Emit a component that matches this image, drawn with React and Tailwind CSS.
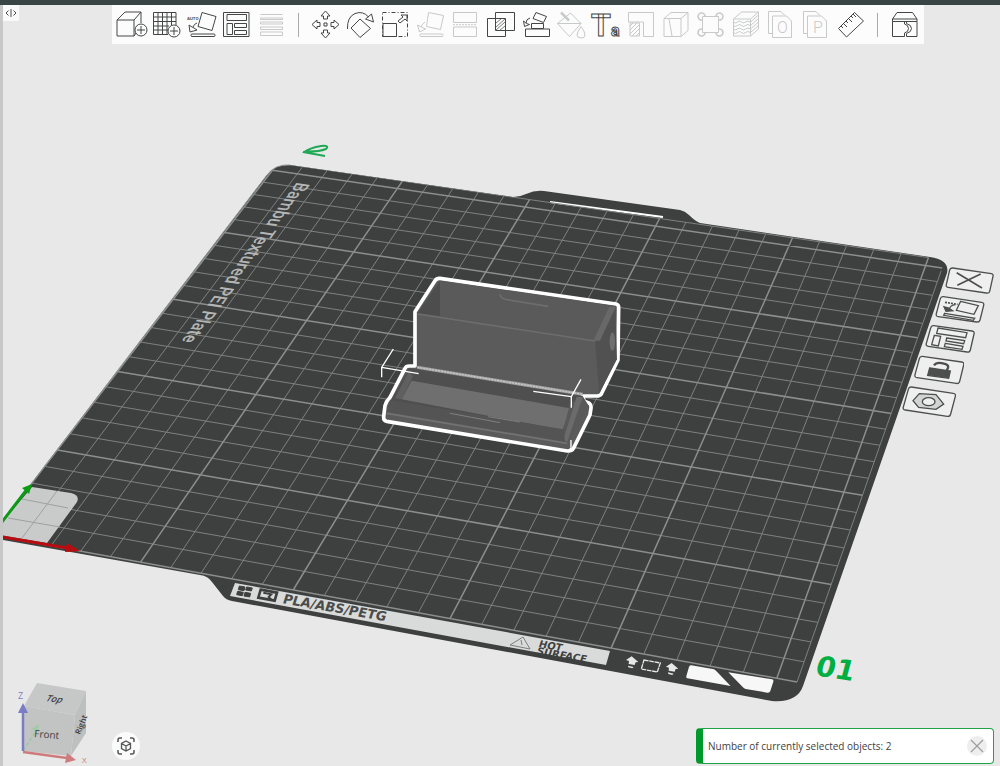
import React from "react";

// plate corners on screen: front left, front right, back right, back left
const CORNERS = [
  [-8, 535],
  [797, 682],
  [945, 260],
  [278, 163],
];
const BED = 256;

// maps a point on the bed (in mm) to the screen, with perspective
const project = (mx, my) => {
  const u = mx / BED;
  const v = my / BED;
  const [[x0, y0], [x1, y1], [x2, y2], [x3, y3]] = CORNERS;
  const dx1 = x1 - x2;
  const dx2 = x3 - x2;
  const dx3 = x0 - x1 + x2 - x3;
  const dy1 = y1 - y2;
  const dy2 = y3 - y2;
  const dy3 = y0 - y1 + y2 - y3;
  const det = dx1 * dy2 - dx2 * dy1;
  const g = (dx3 * dy2 - dx2 * dy3) / det;
  const h = (dx1 * dy3 - dx3 * dy1) / det;
  const w = g * u + h * v + 1;
  return [
    ((x1 - x0 + g * x1) * u + (x3 - x0 + h * x3) * v + x0) / w,
    ((y1 - y0 + g * y1) * u + (y3 - y0 + h * y3) * v + y0) / w,
  ];
};

const line = (a, b, c, d) => {
  const [x1, y1] = project(a, b);
  const [x2, y2] = project(c, d);
  return `M${x1.toFixed(1)} ${y1.toFixed(1)}L${x2.toFixed(1)} ${y2.toFixed(1)}`;
};

const steps = Array.from({ length: 26 }, (_, i) => i * 10);
const gridPath = (list) =>
  list.map((n) => line(n, 0, n, BED) + line(0, n, BED, n)).join("");
const minorGrid = gridPath(steps.filter((n) => n % 50 !== 0));
const majorGrid = gridPath(steps.filter((n) => n % 50 === 0));
const gridEdge = line(0, BED, 250, BED) + line(BED, 0, BED, 248);

const plateShape =
  "M-8 535L267 175Q275 164 290 165L513 197Q520 197 526 194Q535 190 544 191L680 210Q685 211 689 215Q695 221 700 223L930 257Q950 260 947 273L803 686Q797 703 772 701L232 601Q226 600 223 596L212 582Q208 576 200 575L-8 538Z";

const Grid = () => (
  <g fill="none" clipPath="url(#plate)">
    <path d={minorGrid} stroke="#7d807f" strokeWidth="1" />
    <path d={majorGrid} stroke="#8b8e8d" strokeWidth="1.5" />
    <path d={gridEdge} stroke="#7d807f" strokeWidth="1" />
  </g>
);

const Plate = () => (
  <g>
    <clipPath id="plate">
      <path d={plateShape} />
    </clipPath>
    <path d={plateShape} fill="#3e403f" />
    <path d="M-8 535L267 175Q275 164 290 165" fill="none" stroke="#8d908f" />
    <path d="M550 202L663 217" stroke="#fff" strokeWidth="2" />
    <Grid />
    {/* exclude area */}
    <path d="M-8 534L32 487L71 493Q80 495 77 502L47 543Z" fill="#c9caca" />
    <path d="M22 499L68 508M8 518L60 527M22 538L57 491" stroke="#9fa1a1" />
  </g>
);

const PlateLabels = () => (
  <g>
    <text
      transform="translate(297 182) rotate(126) skewX(28)"
      className="font-['Roboto'] text-[17px] font-medium"
      fill="#b4b6b5"
    >
      Bambu Textured PEI Plate
    </text>
    <path d="M235 583L610 651L606 665L230 596Z" fill="#d9dbdb" />
    <g transform="translate(200 560) scale(.3333)">
      <path
        d="M118 78l17 3-3 11-17-3zM140 81l17 3-3 9-17-3zM113 94l17 3-3 10-17-3zM135 97l17 3-3 11-17-3z"
        fill="#3e403f"
        stroke="#3e403f"
        strokeWidth="3"
      />
      <path d="M182 89l49 9-7 24-49-9z" fill="none" stroke="#3e403f" strokeWidth="8" />
      <path d="M190 98l24 5-8 8 8 8" fill="none" stroke="#3e403f" strokeWidth="6" />
    </g>
    <text
      transform="translate(282 603) rotate(10) skewX(-8)"
      className="font-['DejaVu_Sans'] text-[13px] font-bold"
      fill="#4a4c4b"
    >
      PLA/ABS/PETG
    </text>
    <path d="M510 645L523 637L530 649Z" fill="none" stroke="#7c7f7e" />
    <path d="M521 640L522 645" stroke="#7c7f7e" />
    <text
      transform="translate(538 647) rotate(10) skewX(-8)"
      className="font-['DejaVu_Sans'] text-[10px] font-bold"
      fill="#3e403f"
    >
      HOT
    </text>
    <text
      transform="translate(536 654) rotate(10) skewX(-8)"
      className="font-['DejaVu_Sans'] text-[10px] font-bold"
      fill="#3e403f"
    >
      SURFACE
    </text>
    <g transform="translate(490 610) scale(.3333)">
      <path d="M408 150l17-11 20 17-8 1-3 8-18-3 1-9zM414 167l17 4-4 4-12-3z" fill="#e6e7e7" />
      <path d="M528 170l17-11 20 17-8 1-3 8-18-3 1-9zM534 187l17 4-4 4-12-3z" fill="#e6e7e7" />
      <path
        d="M462 150l49 9-9 27-48-9z"
        fill="none"
        stroke="#e6e7e7"
        strokeWidth="4"
        strokeDasharray="14 2"
      />
      <path d="M604 166L668 177Q674 178 678 182L722 228L592 205Q587 204 589 199L597 171Q599 165 604 166Z" fill="#f7f7f7" />
      <path d="M715 187L846 208Q852 209 850 215L841 243Q839 249 832 248L767 237Q762 236 759 232Z" fill="#f7f7f7" />
    </g>
    <text
      transform="translate(814 675) rotate(9) skewX(-6)"
      className="font-['DejaVu_Sans'] text-[28px] font-bold"
      fill="#00ae42"
    >
      01
    </text>
    <path
      d="M303 152L325 156M305 151.500Q318 152 326 149Q330 145 321 146Q310 148 305 151.500Z"
      fill="none"
      stroke="#1fa855"
      strokeWidth="2"
    />
  </g>
);

const OriginAxes = () => (
  <g>
    <path d="M-8 535L28 488" stroke="#0c9a16" strokeWidth="3" />
    <path d="M32 484L22 488L29 494Z" fill="#0b9d14" />
    <path d="M-8 535L67 548" stroke="#b80c10" strokeWidth="3" />
    <path d="M80 551L67 543L65 552Z" fill="#b80c10" />
  </g>
);

const Model = () => (
  <g transform="translate(360 260) scale(.3333)">
    <path
      d="M165 318L165 155L225 62Q230 54 240 55L768 132Q776 134 776 142L774 300L724 402Q720 408 710 408L668 408L673 424L688 430Q694 434 693 445L690 465L640 566Q635 574 622 573L80 484Q70 482 71 470L75 437Q78 425 90 412L135 325Q138 318 148 318Z"
      fill="#5b5b5b"
      stroke="#fff"
      strokeWidth="11"
      strokeLinejoin="round"
    />
    {/* box */}
    <path d="M172 160L240 62L240 168Z" fill="#4d4d4d" />
    <path d="M240 62L766 138L705 240L240 170Z" fill="#5a5a5a" />
    <path d="M420 103Q422 115 440 119L565 139" fill="none" stroke="#6d6d6d" strokeWidth="5" />
    <path d="M172 160L705 238L712 400L172 318Z" fill="#5b5b5b" />
    <path d="M705 240L766 138L771 298L718 400Z" fill="#515151" />
    <path d="M700 242L748 140L768 140L720 242Z" fill="#686868" />
    <path d="M172 162L705 243" stroke="#6d6d6d" strokeWidth="5" />
    <ellipse cx="757" cy="245" rx="8" ry="28" fill="#6f6f6f" />
    {/* lid */}
    <path d="M148 325L668 408L610 540L88 430Z" fill="#4f4f4f" />
    <path d="M155 362L630 445L608 510L125 418Z" fill="#6f6f6f" />
    <path d="M148 330L105 415L125 418L158 350Z" fill="#606060" />
    <path d="M630 430L668 408L688 440L622 550L608 535L612 505Z" fill="#595959" />
    <path d="M650 410L668 412L622 545L610 540Z" fill="#6b6b6b" />
    <path d="M90 420L610 508L615 545L80 455Z" fill="#545454" />
    <path d="M80 460L622 550" stroke="#727272" strokeWidth="5" />
    <path d="M270 460L420 488M385 470L480 486" stroke="#808080" strokeWidth="3" />
    <path d="M172 322L668 403" stroke="#a2a2a2" strokeWidth="9" />
    <path d="M172 322L668 403" stroke="#c8c8c8" strokeWidth="4" strokeDasharray="6 3" />
    <path
      d="M100 267L65 322L65 352M65 322L176 341M663 358L634 410L634 443M634 410L520 394M633 540L633 565L622 573"
      fill="none"
      stroke="#fff"
      strokeWidth="4"
    />
  </g>
);

const NavCube = () => (
  <g>
    <path d="M37 683L86 691L75 715L24 706Z" fill="#c6c7c7" />
    <path d="M24 706L75 715L71 756L23 751Z" fill="#c2c3c3" />
    <path d="M86 691L86 733L71 756L75 715Z" fill="#bebfbf" />
    <path d="M23 751L36 731" stroke="#9cc7a2" strokeWidth="1.5" strokeDasharray="4 2" />
    <path d="M39 724L31 729L38 733Z" fill="#a3cba9" />
    <path d="M23 751L23 711" stroke="#7c7cc6" strokeWidth="2.5" />
    <path d="M23 703L18 713L28 713Z" fill="#7c7cc6" />
    <path d="M23 752L67 758" stroke="#cf7b7d" strokeWidth="2.5" />
    <path d="M76 760L67 753L65 763Z" fill="#cf7b7d" />
    <g className="font-['Open_Sans']">
      <text transform="translate(45 701) rotate(7) skewX(-25)" className="text-[9px] font-semibold" fill="#3c3c3c">
        Top
      </text>
      <text transform="translate(34 737) rotate(5)" className="text-[10px]" fill="#3c3c3c">
        Front
      </text>
      <text transform="translate(80 735) rotate(-68)" className="text-[8px] font-semibold" fill="#3c3c3c">
        Right
      </text>
      <text x="18" y="699" className="text-[9px]" fill="#7c7cc6">
        Z
      </text>
      <text x="82" y="763" className="text-[8px]" fill="#cf7b7d">
        X
      </text>
    </g>
  </g>
);

const Scene = () => (
  <svg
    className="absolute inset-0 h-full w-full"
    viewBox="3 5 997 761"
    preserveAspectRatio="xMidYMid slice"
    aria-label="Build plate"
  >
    <Plate />
    <PlateLabels />
    <OriginAxes />
    <Model />
    <NavCube />
  </svg>
);

// toolbar icons, all drawn on a 35x39 field
const icons = {
  add: (
    <>
      <path d="M3 15h17v16H3zM3 15l8-8h16l-7 8M27 7v11M20 31l2-3" />
      <circle cx="27" cy="25" r="6" />
      <path d="M27 21v8M23 25h8" />
    </>
  ),
  addPlate: (
    <>
      <path d="M19 29.500H4.500V7.500H27V20M9 7.500v22M13.500 7.500v22M18 7.500v22M22.500 7.500v13M4.500 12H27M4.500 16.500H27M4.500 21H20M4.500 25H19" />
      <circle cx="25" cy="26" r="6" />
      <path d="M25 22v8M21 26h8" />
    </>
  ),
  auto: (
    <>
      <text x="3" y="15" className="font-['Inter'] text-[4px] font-bold" fill="currentColor" stroke="none">
        AUTO
      </text>
      <path d="M18 7.500l14 4-4 14-14-4zM13 18q-3 1-4 4M5 20l1 7 7-2-3-2-2-1z" />
      <rect x="7" y="29" width="24" height="2.500" rx="1" />
    </>
  ),
  arrange: (
    <>
      <path d="M4.500 7.500h25.500v24H4.500zM8 9.500h19.500v6H8zM8 18.500h5.500v11H8zM15.500 18.500h12v4h-12zM15.500 25.500h12v4h-12z" />
    </>
  ),
  layers: <path d="M6.500 9.500h22M6.500 13h22v1.500h-22zM6.500 17h22v2h-22zM6.500 22h22v2.500h-22zM6.500 27h22v3.500h-22z" />,
  move: (
    <path d="M17.500 6l4.500 5h-2.500v3h-4v-3H13zM17.500 33l4.500-5h-2.500v-3h-4v3H13zM4 19.500l5-4.500v2.500h3v4H9V24zM31 19.500L26 15v2.500h-3v4h3V24zM16 18h3v3h-3z" />
  ),
  rotate: <path d="M17 14l10.500 9.500L17 32.500 8 23zM4.500 24Q4 12 12 8.500Q20 5.500 25.500 12M22.500 14l8 3-2-8z" />,
  scale: (
    <>
      <path d="M4.500 7.500h25v24h-25z" strokeDasharray="4 2 1 2" />
      <path d="M5 18.500h13.500v13H5zM20 16l5-4-2-2h6v6l-2-2-5 4z" />
    </>
  ),
  lay: (
    <>
      <path d="M15.500 7.500l15 3-3 14-14-3zM12 17q-3 2-4 5M4.500 20l2 7 6-3-4-2z" />
      <rect x="7" y="29" width="23" height="2.500" rx="1" />
    </>
  ),
  cut: (
    <>
      <path d="M5.500 7.500h23v10h-23zM5.500 22h23v9.500h-23z" />
      <path d="M5 19.700h24" strokeDasharray="2 1" />
    </>
  ),
  boolean: (
    <>
      <path d="M12.500 7.500h19v18h-19zM4.500 13.500h18v18h-18z" />
      <path d="M13 18l5-4M13 22l9-8M13 25l9-8M17 25l5-4" strokeWidth=".7" />
    </>
  ),
  assemble: <path d="M18 7.500l10.500 4-3 6-10.500-4zM13.500 18.500h12v5h-12zM7.500 24h24v7.500h-24zM12 13q-4 1-4 5M5.500 16l1 5.500 5-2-3-1z" />,
  paint: (
    <>
      <path d="M17.500 8l10.500 10.500-11.500 13L4.500 18.500zM4.500 18.500H28M28 21.500q-4 6-4 8.500t4 3 4-3-4-8.500z" />
      <path d="M8 7.500l8 8" strokeWidth="2.500" />
    </>
  ),
  text: (
    <>
      <text x="3" y="31" className="font-['Roboto'] text-[32px] font-bold">
        T
      </text>
      <text x="23" y="31" className="font-['Roboto'] text-[16px] font-bold">
        a
      </text>
    </>
  ),
  support: (
    <path d="M5.500 7.500h25v24H20.500V17h-15zM7 18h9.500v13H7zM7 21l3-3M7 25l7-7M7 29l9-9M9 31l7-7M13 31l3-3" />
  ),
  seam: <path d="M6 13.500h17v18H6zM6 13.500l7-6h17l-7 6M30 7.500v18l-7 6M11 14l3 17" />,
  brim: (
    <>
      <path d="M9.500 11.500h16v16h-16z" />
      <path d="M12 11a3.500 3.500 0 1 0-3 4M23 11a3.500 3.500 0 1 1 3 4M12 28a3.500 3.500 0 1 1-3-4M23 28a3.500 3.500 0 1 0 3-4" strokeWidth="1.6" />
    </>
  ),
  variable: (
    <path d="M5.500 14l8-7h17l-8 7zM5.500 14v17h17V14M22.500 31l8-7V7M5.500 17q2 2 4 0t4 0 4 0 5 0l8-7M5.500 20.500q2 2 4 0t4 0 4 0 5 0l8-7M5.500 24q2 2 4 0t4 0 4 0 5 0l8-7M5.500 27.500q2 2 4 0t4 0 4 0 5 0l8-7" />
  ),
  pageO: (
    <>
      <path d="M9.500 28.500h-4v-22H18l4 4M9.500 11h14l5 5v16.500h-19z" />
      <text x="14" y="28" className="font-['Roboto'] text-[16px] font-light" fill="currentColor" stroke="none">
        O
      </text>
    </>
  ),
  pageP: (
    <>
      <path d="M9.500 28.500h-4v-22H18l4 4M9.500 11h14l5 5v16.500h-19z" />
      <text x="15" y="28" className="font-['Roboto'] text-[16px] font-light" fill="currentColor" stroke="none">
        P
      </text>
    </>
  ),
  measure: <path d="M5.500 23.500l16-16 9 8.500-17 16zM8 21l2 2M10.500 18.500l3.500 3.500M13 16l2 2M15.500 13.500L19 17M18 11l2 2M20 9l3 3" />,
  assembly: (
    <path d="M5.500 14L10 7.500h15.500L30 14zM5.500 14v2.500H30V14M5.500 16.500v15h12v-3.500q4-1 4-4.500t-4-4.500v-2.500M30 16.500v15H19.500v-3M19.500 16.500v2q5 1.500 5 5t-5 5" />
  ),
};

const mainTools = [
  { icon: "add", label: "Add" },
  { icon: "addPlate", label: "Add plate" },
  { icon: "auto", label: "Auto orient" },
  { icon: "arrange", label: "Arrange" },
  { icon: "layers", label: "Split to parts", off: true },
];

const editTools = [
  { icon: "move", label: "Move" },
  { icon: "rotate", label: "Rotate" },
  { icon: "scale", label: "Scale" },
  { icon: "lay", label: "Lay on face", off: true },
  { icon: "cut", label: "Cut", off: true },
  { icon: "boolean", label: "Mesh boolean" },
  { icon: "assemble", label: "Assemble" },
  { icon: "paint", label: "Color painting", off: true },
  { icon: "text", label: "Text shape" },
  { icon: "support", label: "Support painting", off: true },
  { icon: "seam", label: "Seam painting", off: true },
  { icon: "brim", label: "Brim ears", off: true },
  { icon: "variable", label: "Variable layer height", off: true },
  { icon: "pageO", label: "Split to objects", off: true },
  { icon: "pageP", label: "Split to parts", off: true },
  { icon: "measure", label: "Measure" },
];

const ToolButton = ({ icon, label, off }) => (
  <button
    type="button"
    aria-label={label}
    disabled={off}
    className="h-[39px] w-[35px] text-[#444646] disabled:text-[#c8c9c9]"
  >
    <svg viewBox="0 0 35 39" className="h-full w-full" fill="none" stroke="currentColor" strokeWidth="1">
      {icons[icon]}
    </svg>
  </button>
);

const Separator = () => (
  <div className="flex w-[19px] justify-center">
    <div className="h-6 w-px bg-[#a8a9a9]" />
  </div>
);

const Toolbar = () => (
  <div className="flex items-center bg-[#fcfcfc] px-[2px]">
    {mainTools.map((t) => (
      <ToolButton key={t.icon} {...t} />
    ))}
    <Separator />
    {editTools.map((t) => (
      <ToolButton key={t.icon} {...t} />
    ))}
    <Separator />
    <ToolButton icon="assembly" label="Assembly view" />
  </div>
);

// buttons that stand beside the plate, slanted with it
const PlateButtons = () => (
  <>
    <button type="button" aria-label="Delete plate" className="absolute left-[94.5%] top-[34.3%] h-[30px] w-[50px]">
      <svg viewBox="165 48 150 90" className="h-full w-full" fill="none" stroke="#4d4f4f" strokeWidth="5">
        <path d="M188 54L304 71Q311 72 309 79L299 124Q297 131 289 129L174 112Q167 111 169 104L179 60Q181 53 188 54Z" fill="#efefef" strokeWidth="4" />
        <path d="M200 68L276 114M272 72L202 106" />
      </svg>
    </button>
    <button type="button" aria-label="Orient plate" className="absolute left-[93.5%] top-[38.1%] h-[30px] w-[50px]">
      <svg viewBox="135 135 150 90" className="h-full w-full" fill="none" stroke="#4d4f4f" strokeWidth="4">
        <path d="M160 140L275 157Q283 158 281 166L270 210Q268 217 260 216L145 200Q137 199 139 191L151 146Q153 139 160 140Z" fill="#efefef" />
        <path d="M212 154L265 167L252 193L199 181ZM196 164Q180 166 178 178M164 190L254 205L250 211L161 196Z" />
        <path d="M162 170L168 184L188 182L176 174Z" fill="#4d4f4f" />
        <path d="M165 157L203 163" strokeDasharray="6 3" strokeWidth="5" />
      </svg>
    </button>
    <button type="button" aria-label="Arrange plate" className="absolute left-[92.5%] top-[41.9%] h-[30px] w-[50px]">
      <svg viewBox="105 222 150 90" className="h-full w-full" fill="none" stroke="#4d4f4f" strokeWidth="4">
        <path d="M131 227L246 243Q254 244 252 252L241 300Q239 308 231 306L115 289Q107 288 109 280L122 234Q124 226 131 227Z" fill="#efefef" />
        <path d="M144 234L231 248L227 263L140 250ZM133 256L152 259L145 288L125 284ZM170 264L224 272L221 281L168 273ZM166 280L219 289L216 298L163 290Z" />
      </svg>
    </button>
    <button type="button" aria-label="Lock plate" className="absolute left-[91.4%] top-[46%] h-[30px] w-[50px]">
      <svg viewBox="72 315 150 90" className="h-full w-full" fill="none" stroke="#4d4f4f" strokeWidth="4">
        <path d="M97 319L215 336Q223 337 221 345L209 394Q207 402 199 400L81 383Q73 382 75 374L88 326Q90 318 97 319Z" fill="#efefef" />
        <path d="M119 354L181 363L176 385L113 376Z" fill="#4d4f4f" />
        <path d="M170 361Q182 345 162 341Q140 334 132 346" strokeWidth="7" />
      </svg>
    </button>
    <button type="button" aria-label="Plate settings" className="absolute left-[90.2%] top-[49.9%] h-[35px] w-[54px]">
      <svg viewBox="36 405 162 105" className="h-full w-full" fill="none" stroke="#4d4f4f" strokeWidth="4">
        <path d="M64 411L190 430Q198 431 196 439L182 492Q180 500 172 499L46 480Q38 479 40 471L55 418Q57 410 64 411Z" fill="#efefef" />
        <path d="M88 431L138 434L161 462L138 478L86 472L69 452Z" fill="#d2d3d3" />
        <ellipse cx="116" cy="455" rx="19" ry="12" fill="#efefef" />
      </svg>
    </button>
  </>
);

const Toast = () => (
  <div
    role="status"
    className="flex h-9 w-[298px] items-center rounded border border-[#1fa24a] border-l-[7px] border-l-[#009a2c] bg-white pl-[5px] pr-[6px]"
  >
    <p className="flex-1 whitespace-nowrap font-['Open_Sans',sans-serif] text-[10px] leading-4 text-[#3f4141]">
      Number of currently selected objects: 2
    </p>
    <button type="button" aria-label="Close" className="flex size-5 items-center justify-center rounded-full bg-[#eeeeee]">
      <svg viewBox="0 0 14 14" className="size-[14px]" stroke="#9b9d9d" strokeWidth="1.200">
        <path d="M1 1L13 13M13 1L1 13" />
      </svg>
    </button>
  </div>
);

const App = () => {
  return (
    <div className="flex h-screen flex-col overflow-hidden bg-[#e8e8e8] font-['Open_Sans',sans-serif]">
      <header className="h-[5px] shrink-0 bg-[#384544]" />
      <div className="flex min-h-0 flex-1">
        <aside className="w-[3px] shrink-0 bg-[#c8c8c8]" />
        <main className="relative flex min-w-0 flex-1 flex-col justify-between overflow-hidden">
          <Scene />
          <PlateButtons />
          <div className="relative flex items-start">
            <button
              type="button"
              aria-label="Toggle sidebar"
              className="flex size-4 items-center justify-center bg-[#fafafa]"
            >
              <svg viewBox="0 0 12 12" className="size-3" fill="none" stroke="#4a4c4c">
                <path d="M3.500 3.500L1 6l2.500 2.500M8.500 3.500L11 6 8.500 8.500M6 2v8" />
              </svg>
            </button>
            <div className="flex flex-1 justify-center pl-[17px]">
              <Toolbar />
            </div>
          </div>
          <div className="relative flex items-end justify-between pb-[2px] pl-[109px] pr-[6px]">
            <button
              type="button"
              aria-label="Fit view"
              className="mb-1 flex size-7 items-center justify-center rounded-full bg-[#fbfbfb]"
            >
              <svg viewBox="0 0 18 18" className="size-[18px]" fill="none" stroke="#555757" strokeWidth="1.500">
                <path d="M1 5V3q0-2 2-2h2M13 1h2q2 0 2 2v2M17 13v2q0 2-2 2h-2M5 17H3q-2 0-2-2v-2" />
                <path d="M9 4l4.500 2.500v5L9 14l-4.500-2.500v-5zM4.500 6.500L9 9l4.500-2.500M9 9v5" strokeWidth="1.300" />
              </svg>
            </button>
            <Toast />
          </div>
        </main>
      </div>
    </div>
  );
};

export default App;
